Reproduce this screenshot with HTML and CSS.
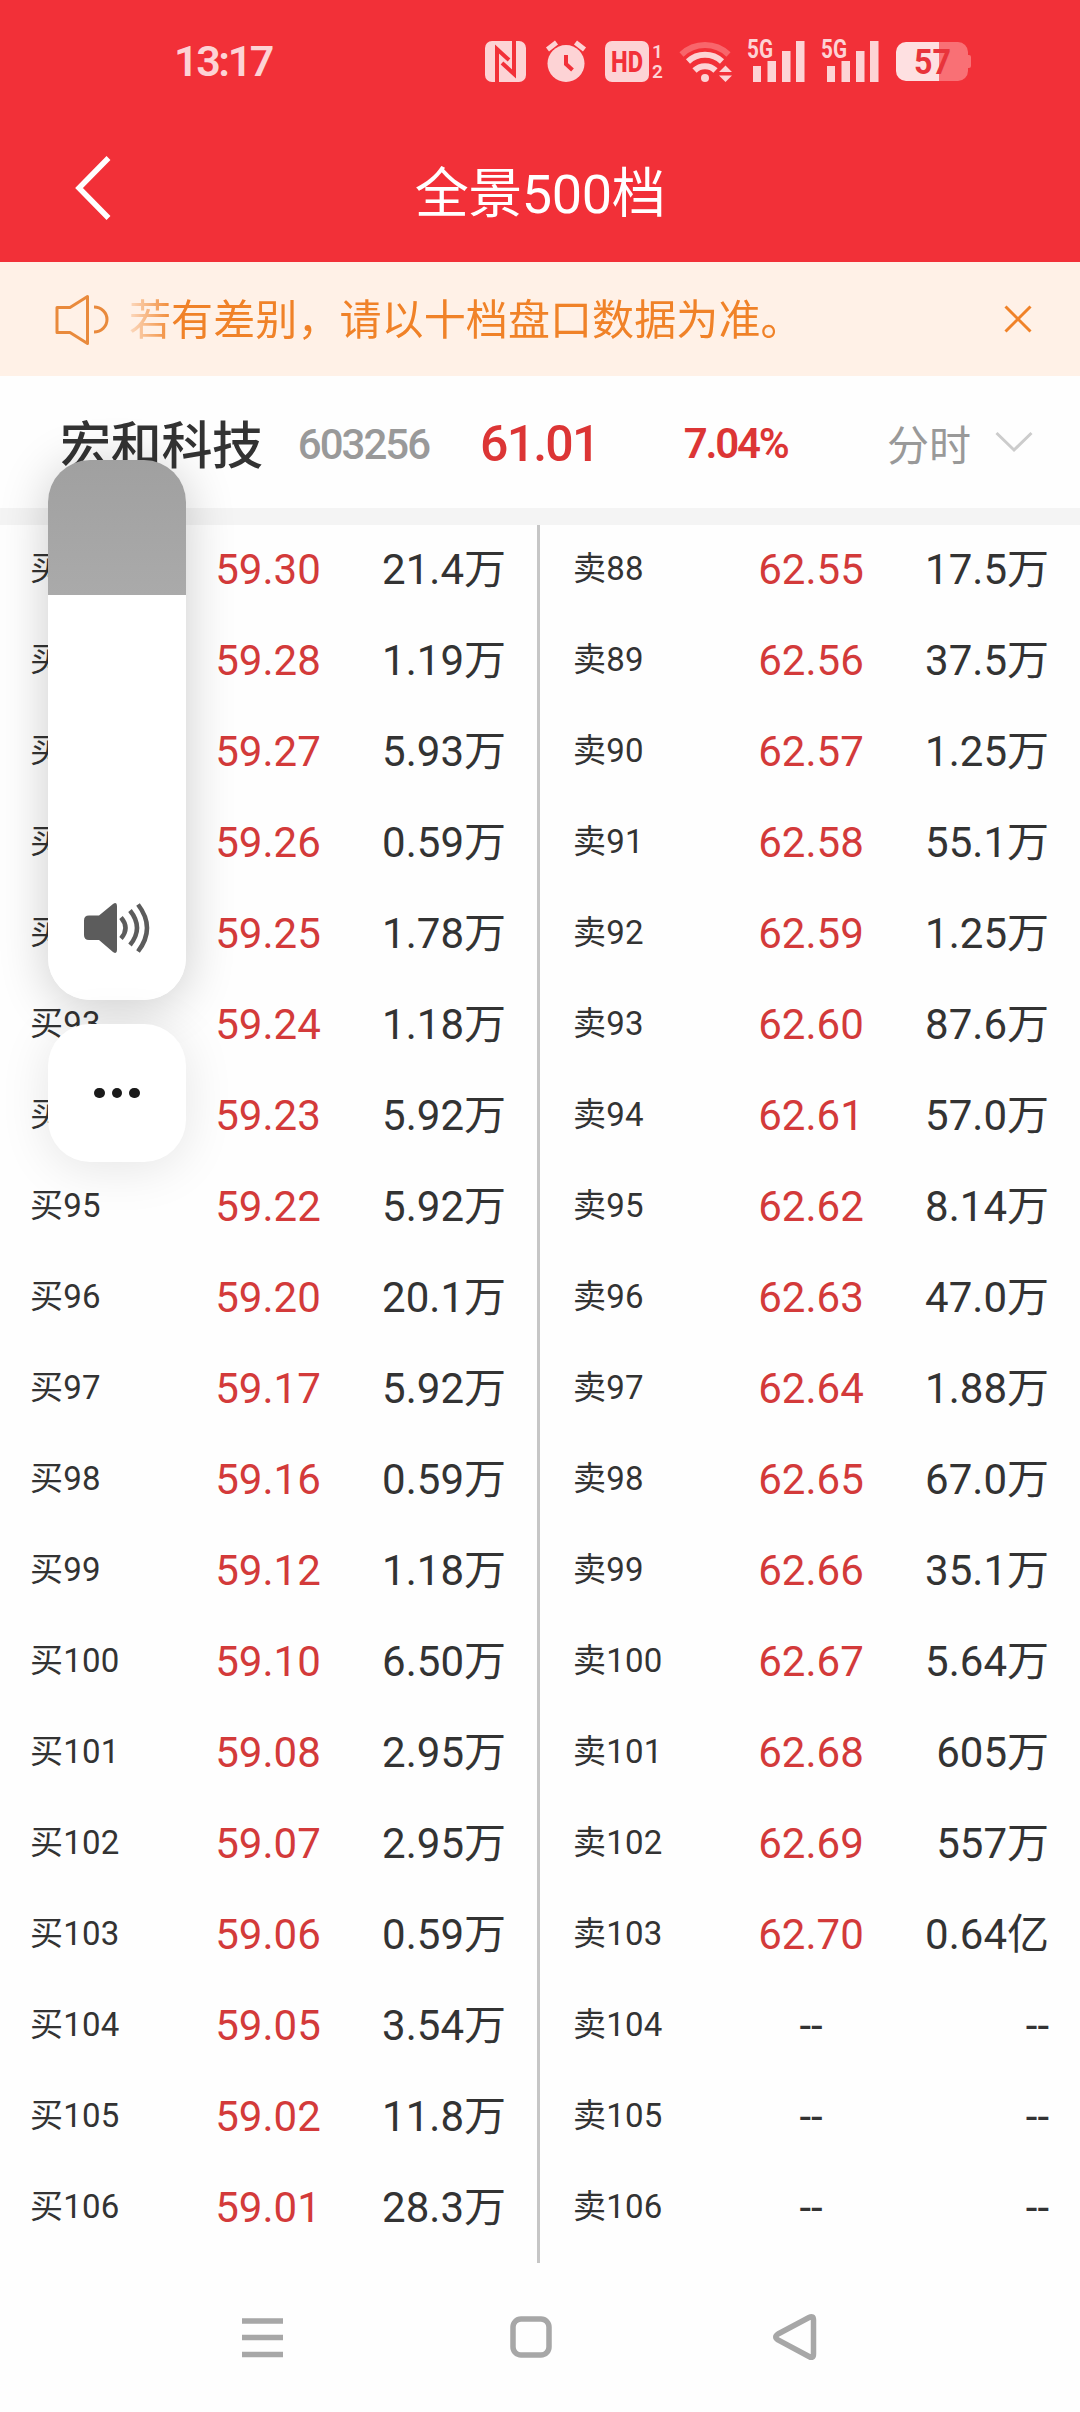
FILE: index.html
```html
<!DOCTYPE html>
<html lang="zh-CN">
<head>
    <meta charset="UTF-8">
    <title>全景500档</title>
    <meta name="viewport" content="width=device-width, initial-scale=1">
    <link rel="stylesheet" href="styles.css">
</head>
<body>
<header class="top">
    <div class="status">
        <span class="clock">13:17</span>
        <div class="status-icons">
            <svg class="nfc" width="41" height="41" viewBox="0 0 41 41">
                <rect width="41" height="41" rx="7"/>
                <path class="cut" d="M12 41V8l12 11M29 0v33L17 22"/>
            </svg>
            <svg class="alarm" width="40" height="41" viewBox="0 0 40 41">
                <circle cx="20" cy="22.500" r="18.500"/>
                <path class="line" d="M1.500 8.500l9-7M38.500 8.500l-9-7"/>
                <path class="cut" d="M20 14v9l6.500 6"/>
            </svg>
            <svg class="hd" width="59" height="41" viewBox="0 0 59 41">
                <rect width="44" height="41" rx="7"/>
                <text class="hd-text" x="6" y="31" textLength="32" lengthAdjust="spacingAndGlyphs">HD</text>
                <text class="sim" x="47" y="17">1</text>
                <text class="sim" x="47" y="37">2</text>
            </svg>
            <svg class="wifi" width="52" height="41" viewBox="0 0 52 41">
                <path class="arc faint" d="M1.500 13.500a34 34 0 0 1 47 0"/>
                <path class="arc" d="M8 20.500a25 25 0 0 1 34 0"/>
                <path class="arc" d="M14.500 29.500a15 15 0 0 1 21 0"/>
                <circle cx="25" cy="37" r="4"/>
                <path d="M39 31l6.500-6.500L52 31zM39 34.500l6.500 6.500 6.500-6.500z"/>
            </svg>
            <svg class="signal" width="58" height="42" viewBox="0 0 58 42">
                <text class="net" x="0" y="18" textLength="26" lengthAdjust="spacingAndGlyphs">5G</text>
                <path d="M6 26h8v16H6zM20.500 21h8.500v21h-8.500zM35 11h8.500v31H35zM49 1h8.500v41H49z"/>
            </svg>
            <svg class="signal" width="58" height="42" viewBox="0 0 58 42">
                <text class="net" x="0" y="18" textLength="26" lengthAdjust="spacingAndGlyphs">5G</text>
                <path d="M6 26h8v16H6zM20.500 21h8.500v21h-8.500zM35 11h8.500v31H35zM49 1h8.500v41H49z"/>
            </svg>
            <svg class="battery" width="75" height="39" viewBox="0 0 75 39">
                <path class="rest" d="M43 0h19a10 10 0 0 1 10 10v3h1q2 0 2 2v9q0 2-2 2h-1v3a10 10 0 0 1-10 10H43z"/>
                <path class="full" d="M43 0H10A10 10 0 0 0 0 10v19a10 10 0 0 0 10 10h33z"/>
                <text class="level" x="18" y="32" textLength="37" lengthAdjust="spacingAndGlyphs">57</text>
            </svg>
        </div>
    </div>
    <div class="title-bar">
        <svg class="back" width="40" height="68" viewBox="0 0 40 68">
            <path d="M36.500 4L7 34l29.500 30"/>
        </svg>
        <h1>全景500档</h1>
    </div>
</header>

<div class="notice">
    <svg class="horn" width="54" height="52" viewBox="0 0 54 52">
        <path d="M2 13.500h13L32.500 2.500V49.500L15 38.500H2zM39 13a13 12.500 0 0 1 0 25"/>
    </svg>
    <p class="notice-text">若有差别，请以十档盘口数据为准。</p>
    <svg class="close" width="28" height="28" viewBox="0 0 28 28">
        <path d="M1.500 1.500l25 25M26.500 1.500l-25 25"/>
    </svg>
</div>

<section class="stock">
    <span class="name">宏和科技</span>
    <span class="code">603256</span>
    <span class="last">61.01</span>
    <span class="change">7.04%</span>
    <span class="mode">分时</span>
    <svg class="arrow" width="38" height="22" viewBox="0 0 38 22">
        <path d="M1.500 2L19 19 36.500 2"/>
    </svg>
</section>

<main class="book">
    <div class="side" id="buy"></div>
    <div class="side sell" id="sell"></div>
</main>

<nav class="nav">
    <svg class="menu" width="42" height="46" viewBox="0 0 42 46">
        <path d="M1 7h41M1 23.500h41M1 40.500h41"/>
    </svg>
    <svg class="home" width="42" height="46" viewBox="0 0 42 46">
        <rect x="3" y="5" width="36" height="36" rx="8"/>
    </svg>
    <svg class="prev" width="44" height="46" viewBox="0 0 44 46">
        <path d="M5 20L36 3.500Q40.500 1 40.500 6v34q0 5-4.500 2.500L5 26q-4.500-3 0-6z"/>
    </svg>
</nav>

<div class="volume">
    <svg width="68" height="50" viewBox="0 0 68 50">
        <path class="body" d="M5 12.500h10L29 1q4-2.500 4 2v44q0 4.500-4 2L15 37H5q-5 0-5-5V17.500q0-5 5-5z"/>
        <path class="wave" d="M37 14.500q9 10.500 0 21M46 7.500q14 17.500 0 34.500M54 1.500q18 23.500 0 47"/>
    </svg>
</div>
<div class="more"><i></i><i></i><i></i></div>

<script>
  const FIRST = 88
  const buy = [
    ['59.30', '21.4万'], ['59.28', '1.19万'], ['59.27', '5.93万'], ['59.26', '0.59万'],
    ['59.25', '1.78万'], ['59.24', '1.18万'], ['59.23', '5.92万'], ['59.22', '5.92万'],
    ['59.20', '20.1万'], ['59.17', '5.92万'], ['59.16', '0.59万'], ['59.12', '1.18万'],
    ['59.10', '6.50万'], ['59.08', '2.95万'], ['59.07', '2.95万'], ['59.06', '0.59万'],
    ['59.05', '3.54万'], ['59.02', '11.8万'], ['59.01', '28.3万']
  ]
  const sell = [
    ['62.55', '17.5万'], ['62.56', '37.5万'], ['62.57', '1.25万'], ['62.58', '55.1万'],
    ['62.59', '1.25万'], ['62.60', '87.6万'], ['62.61', '57.0万'], ['62.62', '8.14万'],
    ['62.63', '47.0万'], ['62.64', '1.88万'], ['62.65', '67.0万'], ['62.66', '35.1万'],
    ['62.67', '5.64万'], ['62.68', '605万'], ['62.69', '557万'], ['62.70', '0.64亿'],
    ['--', '--'], ['--', '--'], ['--', '--']
  ]

  function fill(id, label, rows) {
    document.getElementById(id).innerHTML = rows.map(([price, amount], i) =>
      `<div class="row">
        <span class="level-name">${label}${FIRST + i}</span>
        <span class="price${'--' === price ? ' empty' : ''}">${price}</span>
        <span class="amount">${amount}</span>
      </div>`).join('')
  }

  fill('buy', '买', buy)
  fill('sell', '卖', sell)
</script>
</body>
</html>
```
FILE: styles.css
```css
* {
    box-sizing: border-box;
}

body {
    width: 1080px;
    height: 2412px;
    margin: 0;
    position: relative;
    overflow: hidden;
    display: flex;
    flex-direction: column;
    background-color: #fefefe;
    color: #333;
    font-family: Roboto, "Noto Sans CJK SC", sans-serif;
}

svg {
    display: block;
    flex: none;
    fill: none;
    overflow: visible;
}

.top {
    height: 262px;
    background-color: #f23038;
}

.status {
    height: 122px;
    padding: 0 109px 0 174px;
    display: flex;
    align-items: center;
    justify-content: space-between;
    color: #fdd3d5;
}

.clock {
    font-size: 43px;
    font-weight: 600;
    letter-spacing: -2.4px;
}

.status-icons {
    display: flex;
    align-items: center;
}

.status-icons svg {
    fill: #fdd3d5;
}

.status-icons .cut {
    fill: none;
    stroke: #f23038;
    stroke-width: 4;
}

.alarm {
    margin-left: 20px;
}

.alarm .line {
    stroke: #fdd3d5;
    stroke-width: 5;
}

.hd {
    margin-left: 19px;
}

.hd-text {
    fill: #f23038;
    font-size: 29px;
    font-weight: 800;
}

.sim {
    font-size: 19px;
    font-weight: 600;
}

.wifi {
    margin-left: 16px;
}

.wifi .arc {
    fill: none;
    stroke: #fdd3d5;
    stroke-width: 6;
}

.wifi .faint {
    stroke: #f8666b;
}

.signal {
    margin-left: 15px;
}

.signal + .signal {
    margin-left: 16px;
}

.net {
    font-size: 25px;
    font-weight: 700;
}

.battery {
    margin-left: 17px;
}

.battery .rest {
    fill: #f97075;
}

.battery .full {
    fill: #fee0e1;
}

.battery .level {
    fill: #e8343b;
    font-size: 35px;
    font-weight: 700;
}

.title-bar {
    height: 140px;
    padding-left: 72px;
    display: grid;
    grid-template-columns: 40px 856px;
    align-items: center;
}

.back {
    margin-bottom: 8px;
    stroke: #fff;
    stroke-width: 5.5;
}

.title-bar h1 {
    margin: 5px 0 0;
    color: #fff;
    font-size: 54px;
    font-weight: 400;
    line-height: 80px;
    text-align: center;
    letter-spacing: -0.4px;
}

.notice {
    height: 114px;
    padding: 0 48px 0 55px;
    display: flex;
    align-items: center;
    background-color: #fff1e7;
    color: #f08228;
}

.horn {
    margin-top: 2px;
    stroke: #e98a3c;
    stroke-width: 3;
    stroke-linejoin: round;
}

.notice-text {
    flex: 1;
    margin: 4px 0 0 20px;
    font-size: 42px;
    line-height: 60px;
    letter-spacing: 0.1px;
    -webkit-mask-image: linear-gradient(to right, rgba(0, 0, 0, 0.2), #000 46px);
    mask-image: linear-gradient(to right, rgba(0, 0, 0, 0.2), #000 46px);
}

.close {
    stroke: #f08228;
    stroke-width: 3;
}

.stock {
    height: 149px;
    padding: 0 47px 0 60px;
    display: flex;
    align-items: center;
    border-bottom: 17px solid #f4f4f4;
}

.stock .name {
    font-size: 51px;
    font-weight: 500;
    letter-spacing: -0.3px;
}

.code {
    margin: 4px 0 0 35px;
    color: #999;
    font-size: 42px;
    font-weight: 500;
    letter-spacing: -2px;
}

.last {
    margin: 3px 0 0 51px;
    color: #dc3535;
    font-size: 50px;
    font-weight: 500;
    letter-spacing: -1.8px;
}

.change {
    margin: 2px 0 0 85px;
    color: #dc3535;
    font-size: 42px;
    font-weight: 600;
    letter-spacing: -2.2px;
}

.mode {
    margin-left: auto;
    color: #999;
    font-size: 42px;
}

.arrow {
    margin-left: 24px;
    stroke: #ccc;
    stroke-width: 3;
}

.book {
    height: 1738px;
    display: grid;
    grid-template-columns: 540px 540px;
}

.side {
    padding: 0 31px 0 30px;
    border-right: 3px solid #c6c6c6;
}

.side.sell {
    padding-left: 33px;
    border-right: 0;
}

.row {
    height: 91px;
    padding-bottom: 1px;
    display: grid;
    grid-template-columns: 1fr 120px 1fr;
    align-items: center;
    font-size: 42px;
    line-height: 60px;
}

.level-name {
    margin-top: -2px;
    font-size: 33px;
    letter-spacing: 0.2px;
}

.price {
    color: #d33a3a;
    text-align: center;
}

.price.empty {
    color: #333;
}

.amount {
    text-align: right;
}

.nav {
    flex: 1;
    padding: 51px 263px 0 241px;
    display: flex;
    justify-content: space-between;
    align-items: flex-start;
}

.nav svg {
    stroke: #a7a7a7;
    stroke-width: 5.5;
}

.home {
    margin-left: 5px;
}

/* system volume overlay */
.volume {
    position: absolute;
    left: 48px;
    top: 460px;
    width: 138px;
    height: 540px;
    padding: 0 0 47px 36px;
    display: flex;
    align-items: flex-end;
    border-radius: 42px;
    background: linear-gradient(#a0a0a0, #aaa 135px, #fff 135px);
    box-shadow: 0 6px 50px rgba(0, 0, 0, 0.2);
}

.volume .body {
    fill: #5c5c5c;
}

.volume .wave {
    stroke: #5c5c5c;
    stroke-width: 4.5;
}

.more {
    position: absolute;
    left: 48px;
    top: 1024px;
    width: 138px;
    height: 138px;
    display: flex;
    align-items: center;
    justify-content: center;
    gap: 7px;
    border-radius: 42px;
    background-color: #fff;
    box-shadow: 0 6px 50px rgba(0, 0, 0, 0.1);
}

.more i {
    width: 10.5px;
    height: 10.5px;
    border-radius: 50%;
    background-color: #1a1a1a;
}
```
